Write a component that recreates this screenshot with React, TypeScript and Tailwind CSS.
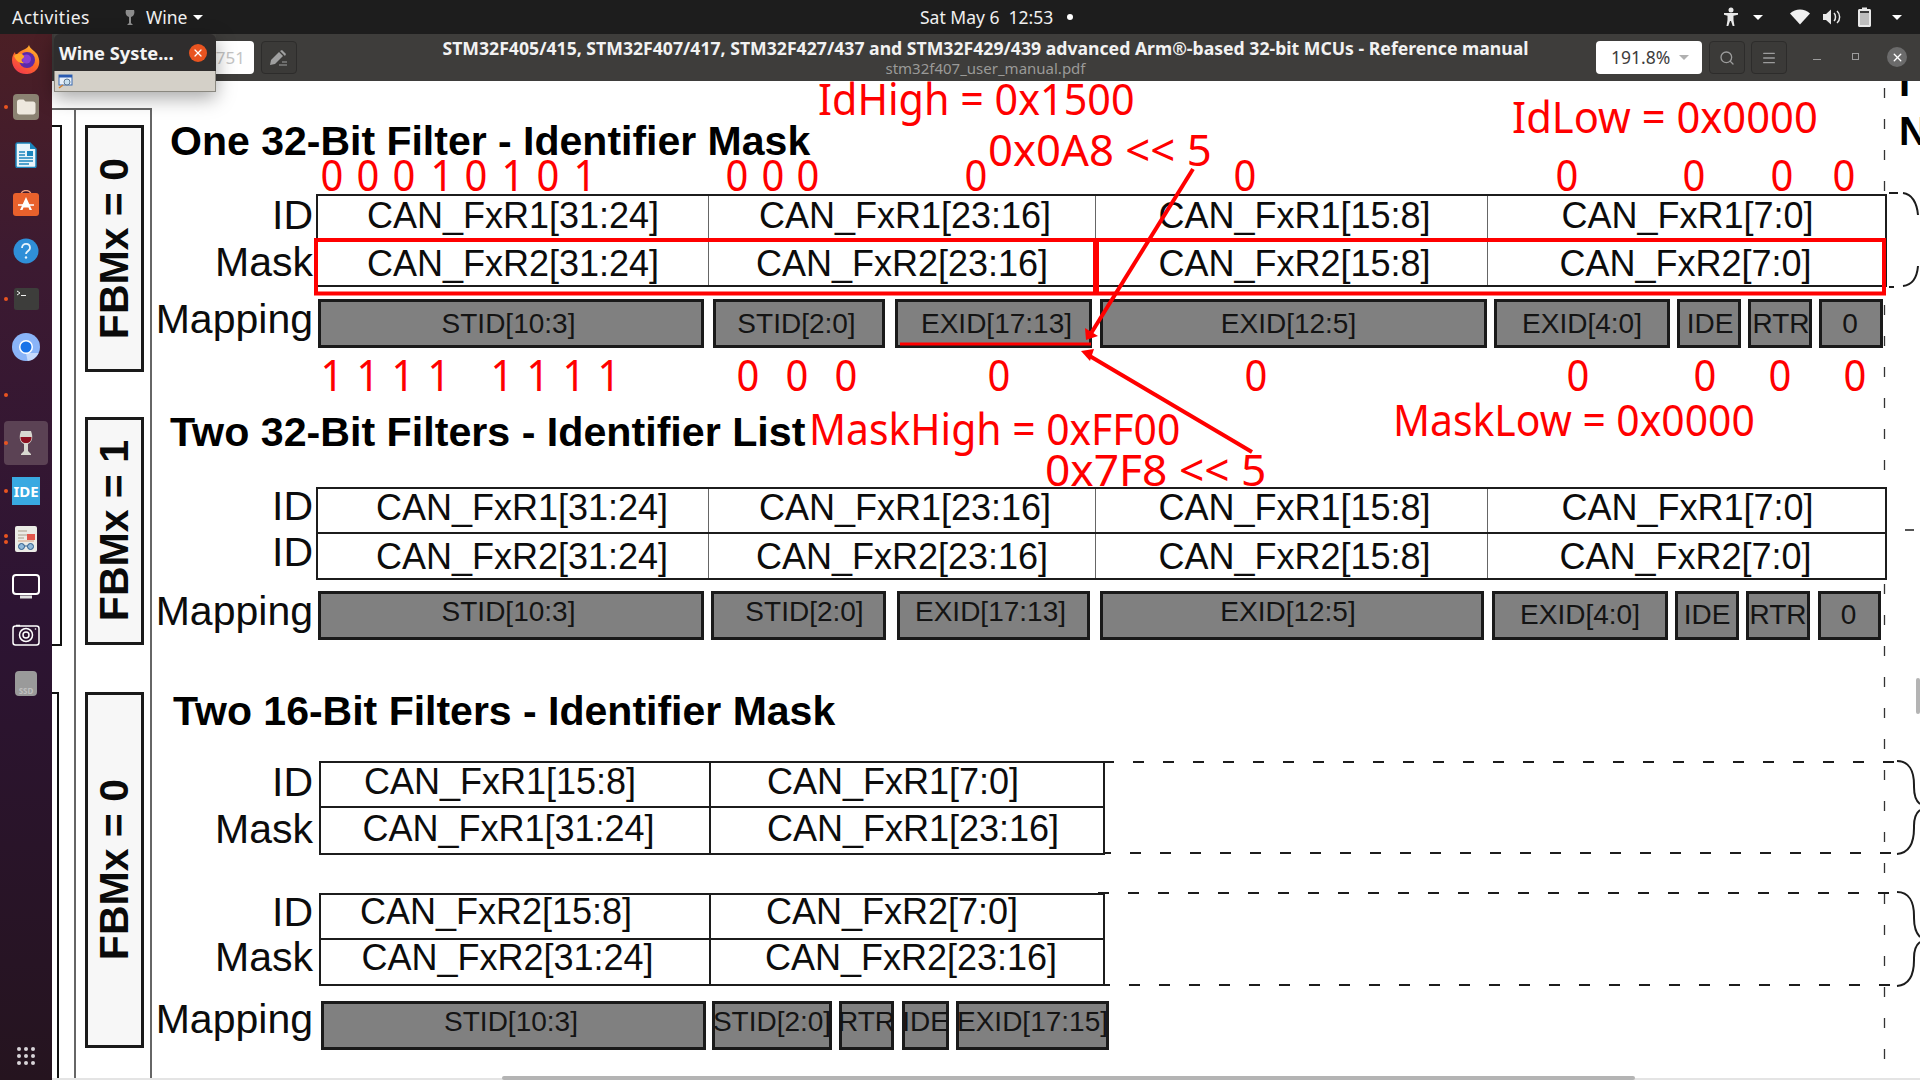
import React from "react";
import { Search, Menu, X } from "lucide-react";

const SANS = "font-['Liberation_Sans',Arial,sans-serif]";
const UI = "font-['Noto_Sans',sans-serif]";

type CellT = { t: string; dx?: number };
type RowT = { h: number; base: number; cells: CellT[] };

function Table({ width, cols, rows, thick, className }: { width: number; cols: number[]; rows: RowT[]; thick?: boolean; className?: string }) {
  return (
    <div className={"border-2 border-[#1c1c1c] bg-white " + (className ?? "")} style={{ width }}>
      {rows.map((r, ri) => {
        const last = ri === rows.length - 1;
        return (
          <div key={ri} className={"flex " + (last ? "" : "border-b-2 border-[#1c1c1c]")} style={{ height: r.h }}>
            {r.cells.map((c, ci) => {
              const lastC = ci === r.cells.length - 1;
              return (
                <div
                  key={ci}
                  className={"flex justify-center " + (lastC ? "flex-1 " : "") + (lastC ? "" : thick ? "border-r-2 border-[#1c1c1c]" : "border-r border-[#666]")}
                  style={lastC ? undefined : { width: cols[ci] }}
                >
                  <span
                    className={SANS + " block whitespace-nowrap text-[36px] leading-none text-[#0c0c0c]"}
                    style={{ marginTop: r.base - 30.5, marginLeft: (c.dx ?? 0) * 2 }}
                  >
                    {c.t}
                  </span>
                </div>
              );
            })}
          </div>
        );
      })}
    </div>
  );
}

type BoxT = { w: number; gap?: number; t: string; low?: boolean; dx?: number };
function MapRow({ base, boxes, className }: { base: number; boxes: BoxT[]; className?: string }) {
  return (
    <div className={"flex h-[49px] " + (className ?? "")}>
      {boxes.map((b, i) => (
        <div
          key={i}
          className="flex justify-center border-[3px] border-[#1a1a1a] bg-[#808080]"
          style={{ width: b.w, marginLeft: b.gap ?? 0 }}
        >
          <span
            className={SANS + " block whitespace-nowrap text-[28px] leading-none text-[#141414]"}
            style={{ marginTop: base + (b.low ? 3 : 0) - 3 - 23.7, marginLeft: (b.dx ?? 0) * 2 }}
          >
            {b.t}
          </span>
        </div>
      ))}
    </div>
  );
}

function Labels({ items, className }: { items: { t: string; h: number }[]; className?: string }) {
  return (
    <div className={"flex w-[163px] flex-col items-end " + (className ?? "")}>
      {items.map((l, i) => (
        <div key={i} className={SANS + " whitespace-nowrap text-[41px] leading-none text-[#0c0c0c]"} style={{ height: l.h }}>
          {l.t}
        </div>
      ))}
    </div>
  );
}

function MapLabel({ className }: { className?: string }) {
  return <div className={SANS + " h-[41px] w-[163px] whitespace-nowrap text-right text-[41px] leading-none text-[#0c0c0c] " + (className ?? "")}>Mapping</div>;
}

function RedT({ t, x, base, w }: { t: string; x: number; base: number; w: number }) {
  return (
    <div
      className={UI + " absolute origin-left whitespace-nowrap text-[43px] leading-none text-[#ff0000]"}
      style={{ left: x, top: base - 38.2, transform: `scaleX(${w})` }}
    >
      {t}
    </div>
  );
}

function DigitRow({ items, base }: { items: [string, number][]; base: number }) {
  return (
    <>
      {items.map(([d, cx], i) => (
        <div
          key={i}
          className={UI + " absolute w-[26px] text-center text-[43px] leading-none text-[#ff0000]"}
          style={{ left: cx - 13, top: base - 38.2, transform: "scaleX(0.93)" }}
        >
          {d}
        </div>
      ))}
    </>
  );
}

function FbmBox({ t, className }: { t: string; className: string }) {
  return (
    <div className={"flex w-[59px] items-center justify-center border-[3px] border-[#1a1a1a] bg-[#f7f7f7] " + className}>
      <span className={SANS + " rotate-180 whitespace-nowrap text-[41px] font-bold leading-none text-[#0a0a0a] [writing-mode:vertical-rl]"}>
        {t}
      </span>
    </div>
  );
}

const c = (a: string, dx = 0): CellT => ({ t: a, dx });

const topDigits: [string, number][] = [
  ["0", 332], ["0", 368], ["0", 404], ["1", 442], ["0", 476], ["1", 513], ["0", 548], ["1", 585],
  ["0", 737], ["0", 773], ["0", 808], ["0", 976], ["0", 1245], ["0", 1567], ["0", 1694], ["0", 1782], ["0", 1844],
];
const botDigits: [string, number][] = [
  ["1", 332], ["1", 368], ["1", 403], ["1", 439], ["1", 502], ["1", 538], ["1", 574], ["1", 609],
  ["0", 748], ["0", 797], ["0", 846], ["0", 999], ["0", 1256], ["0", 1578], ["0", 1705], ["0", 1780], ["0", 1855],
];

function Annotations() {
  return (
    <div className="absolute left-[-52px] top-[-81px] h-[1080px] w-[1920px]">
      <svg className="absolute left-0 top-0" width="1920" height="1080" fill="none">
        <rect x="316" y="240" width="1568" height="53.5" stroke="#ff0000" strokeWidth="4" />
        <rect x="1093" y="240" width="6" height="55" fill="#ff0000" />
        <line x1="900" y1="344" x2="1091" y2="344" stroke="#ff0000" strokeWidth="3" />
        <line x1="1193" y1="169" x2="1090" y2="335" stroke="#ff0000" strokeWidth="4" />
        <polygon points="1086,340 1085,328 1098,336" fill="#ff0000" />
        <line x1="1252" y1="452" x2="1088" y2="355" stroke="#ff0000" strokeWidth="4" />
        <polygon points="1081,351 1094,349 1090,361" fill="#ff0000" />
      </svg>
      <RedT t="IdHigh = 0x1500" x={818} base={115} w={0.96} />
      <RedT t="0x0A8 << 5" x={988} base={166} w={1.016} />
      <RedT t="IdLow = 0x0000" x={1512} base={133} w={0.97} />
      <RedT t="MaskHigh = 0xFF00" x={809} base={445} w={0.95} />
      <RedT t="MaskLow = 0x0000" x={1393} base={436} w={0.95} />
      <RedT t="0x7F8 << 5" x={1045} base={486} w={1.03} />
      <DigitRow items={topDigits} base={191} />
      <DigitRow items={botDigits} base={391} />
    </div>
  );
}

function Backdrop() {
  return (
    <div className="absolute left-[-52px] top-[-81px] h-[1080px] w-[1920px]">
      <div className="absolute left-[50px] top-[125px] h-[521px] w-[12px] border-2 border-[#111]" />
      <div className="absolute left-[40px] top-[692px] h-[400px] w-[19px] border-2 border-[#111]" />
      <div className="absolute left-[52px] top-[108px] h-[2px] w-[98px] bg-[#666]" />
      <div className="absolute left-[74px] top-[108px] h-[972px] w-[2px] bg-[#666]" />
      <div className="absolute left-[150px] top-[108px] h-[972px] w-[2px] bg-[#666]" />
      <svg className="absolute left-0 top-0" width="1920" height="1080" fill="none">
        <line x1="1884.5" y1="88" x2="1884.5" y2="1080" stroke="#333" strokeWidth="1.3" strokeDasharray="10 21" />
        <g stroke="#1c1c1c" strokeWidth="2" strokeDasharray="11 19">
          <line x1="1103" y1="762" x2="1897" y2="762" />
          <line x1="1100" y1="853" x2="1897" y2="853" />
          <line x1="1098" y1="893" x2="1897" y2="893" />
          <line x1="1099" y1="985" x2="1897" y2="985" />
        </g>
        <g stroke="#1c1c1c" strokeWidth="2">
          <path d="M1897 761c12 0 17 10 17 24v2c0 9 2 14 6 17" />
          <path d="M1920 810c-4 3-6 8-6 16v2c0 15-5 25-17 26" />
          <path d="M1897 892c12 0 17 10 17 24v2c0 9 2 15 6 19" />
          <path d="M1920 942c-4 3-6 8-6 16v2c0 15-5 25-17 26" />
          <path d="M1889 193h9M1903 193c9 1 14 10 15 22M1889 287h5M1903 286c9-1 14-8 15-20" />
          <path d="M1905 530h9" strokeWidth="1.5" />
        </g>
      </svg>
      <div className={SANS + " absolute left-[1899px] top-[62px] text-[40px] font-bold leading-none text-black"}>I</div>
      <div className={SANS + " absolute left-[1899px] top-[111px] text-[40px] font-bold leading-none text-black"}>N</div>
    </div>
  );
}

const map1: BoxT[] = [
  { w: 386, t: "STID[10:3]", dx: -2.5 },
  { gap: 9, w: 172, t: "STID[2:0]", dx: -2.5 },
  { gap: 10, w: 197, t: "EXID[17:13]", dx: 3 },
  { gap: 8, w: 387, t: "EXID[12:5]", dx: -5 },
  { gap: 7, w: 176, t: "EXID[4:0]" },
  { gap: 7, w: 64, t: "IDE", dx: 1 },
  { gap: 7, w: 64, t: "RTR", dx: 1 },
  { gap: 7, w: 64, t: "0", dx: -1 },
];
const map2: BoxT[] = [
  { w: 386, t: "STID[10:3]", dx: -2.5 },
  { gap: 7, w: 175, t: "STID[2:0]", dx: 6 },
  { gap: 11, w: 193, t: "EXID[17:13]", dx: -3 },
  { gap: 10, w: 384, t: "EXID[12:5]", dx: -4 },
  { gap: 8, w: 176, t: "EXID[4:0]", low: true },
  { gap: 7, w: 64, t: "IDE", low: true },
  { gap: 7, w: 64, t: "RTR", low: true },
  { gap: 8, w: 63, t: "0", low: true, dx: -1 },
];
const map3: BoxT[] = [
  { w: 385, t: "STID[10:3]", dx: -2.5 },
  { gap: 6, w: 120, t: "STID[2:0]" },
  { gap: 7, w: 55, t: "RTR" },
  { gap: 8, w: 47, t: "IDE" },
  { gap: 7, w: 153, t: "EXID[17:15]" },
];

function PdfPage() {
  return (
    <div className="relative flex h-full">
      {/* filter-mode tabs */}
      <div className="ml-[33px] flex w-[65px] flex-col pt-[44px]">
        <FbmBox t="FBMx = 0" className="h-[247px]" />
        <FbmBox t="FBMx = 1" className="mt-[45px] h-[228px]" />
        <FbmBox t="FBMx = 0" className="mt-[47px] h-[356px]" />
      </div>

      {/* filter diagrams */}
      <div className="flex flex-col pt-[40px]">
        <h2 className={SANS + " ml-[20px] h-[41px] whitespace-nowrap text-[41px] font-bold leading-none text-black"}>One 32-Bit Filter - Identifier Mask</h2>
        <div className="mt-[32px] flex">
          <Labels className="mt-px" items={[{ t: "ID", h: 47 }, { t: "Mask", h: 45 }]} />
          <Table
            className="ml-[3px]"
            width={1571}
            cols={[391, 387, 392]}
            rows={[
              { h: 44, base: 32, cells: [c("CAN_FxR1[31:24]"), c("CAN_FxR1[23:16]", 3), c("CAN_FxR1[15:8]", 3), c("CAN_FxR1[7:0]", 1)] },
              { h: 45, base: 36, cells: [c("CAN_FxR2[31:24]"), c("CAN_FxR2[23:16]"), c("CAN_FxR2[15:8]", 3), c("CAN_FxR2[7:0]", -1)] },
            ]}
          />
        </div>
        <div className="mt-[12px] flex">
          <MapLabel />
          <MapRow className="ml-[5px]" base={35} boxes={map1} />
        </div>

        <h2 className={SANS + " ml-[20px] mt-[64px] h-[41px] whitespace-nowrap text-[41.2px] font-bold leading-none text-black"}>Two 32-Bit Filters - Identifier List</h2>
        <div className="mt-[34px] flex">
          <Labels className="-mt-px" items={[{ t: "ID", h: 46 }, { t: "ID", h: 47 }]} />
          <Table
            className="ml-[3px]"
            width={1571}
            cols={[391, 387, 392]}
            rows={[
              { h: 45, base: 31, cells: [c("CAN_FxR1[31:24]", 9), c("CAN_FxR1[23:16]", 3), c("CAN_FxR1[15:8]", 3), c("CAN_FxR1[7:0]", 1)] },
              { h: 44, base: 35, cells: [c("CAN_FxR2[31:24]", 9), c("CAN_FxR2[23:16]"), c("CAN_FxR2[15:8]", 3), c("CAN_FxR2[7:0]", -1)] },
            ]}
          />
        </div>
        <div className="mt-[11px] flex">
          <MapLabel />
          <MapRow className="ml-[5px]" base={31} boxes={map2} />
        </div>

        <h2 className={SANS + " ml-[23px] mt-[51px] h-[41px] whitespace-nowrap text-[41px] font-bold leading-none text-black"}>Two 16-Bit Filters - Identifier Mask</h2>
        <div className="mt-[29px] flex">
          <Labels className="mt-px" items={[{ t: "ID", h: 47 }, { t: "Mask", h: 46 }]} />
          <Table
            className="ml-[6px]"
            width={786}
            thick
            cols={[390]}
            rows={[
              { h: 45, base: 31, cells: [c("CAN_FxR1[15:8]", -15), c("CAN_FxR1[7:0]", -14)] },
              { h: 45, base: 33, cells: [c("CAN_FxR1[31:24]", -6.5), c("CAN_FxR1[23:16]", 6)] },
            ]}
          />
        </div>
        <div className="mt-[38px] flex">
          <Labels className="-mt-px" items={[{ t: "ID", h: 45 }, { t: "Mask", h: 46 }]} />
          <Table
            className="ml-[6px]"
            width={786}
            thick
            cols={[390]}
            rows={[
              { h: 45, base: 29, cells: [c("CAN_FxR2[15:8]", -19), c("CAN_FxR2[7:0]", -15)] },
              { h: 44, base: 30, cells: [c("CAN_FxR2[31:24]", -7.5), c("CAN_FxR2[23:16]", 4)] },
            ]}
          />
        </div>
        <div className="mt-[15px] flex">
          <MapLabel className="-mt-[2px]" />
          <MapRow className="ml-[8px]" base={31} boxes={map3} />
        </div>
      </div>
    </div>
  );
}

function Firefox() {
  return (
    <svg width="30" height="30" viewBox="0 0 30 30">
      <defs>
        <linearGradient id="ff" x1="0.8" y1="0" x2="0.2" y2="1">
          <stop offset="0" stopColor="#ffbd2e" />
          <stop offset="0.5" stopColor="#ff6a28" />
          <stop offset="1" stopColor="#f0364f" />
        </linearGradient>
      </defs>
      <path d="M18 1c1 4 5 5 8 9 3 5 3 11 0 15-3 4-7 5-11 5C7 30 1 24 1 16c0-3 1-6 3-8 0 2 1 3 2 3 1-3 4-4 6-5 2-1 5-2 6-5z" fill="url(#ff)" />
      <circle cx="16" cy="16" r="8" fill="#5a2aa8" />
      <circle cx="15.5" cy="15" r="4.5" fill="#8b3fd0" />
      <path d="M3 12c3-3 7-3 9-1 2 1 1 3-1 4-1 1 0 3 2 4-4 1-8-2-10-7z" fill="#ffa52b" />
    </svg>
  );
}

function DockIcon({ n }: { n: number }) {
  switch (n) {
    case 0:
      return <Firefox />;
    case 1:
      return (
        <svg width="26" height="26" viewBox="0 0 26 26">
          <rect width="26" height="26" rx="4" fill="#8b8272" />
          <path d="M4 8c0-1.500 1-2.500 2.500-2.500h4l2 2H20c1.500 0 2.500 1 2.500 2.500v8c0 1.500-1 2.500-2.500 2.500H6.500C5 20.500 4 19.500 4 18z" fill="#eee8de" />
        </svg>
      );
    case 2:
      return (
        <svg width="22" height="26" viewBox="0 0 22 26">
          <path d="M1 2.500C1 1.500 1.500 1 2.500 1H15l6 6v17c0 1-.5 1.500-1.500 1.500h-17C1.500 25.500 1 25 1 24z" fill="#e8f4fa" stroke="#1b85bd" strokeWidth="1.500" />
          <path d="M15 1l6 6h-6z" fill="#1b85bd" />
          <path d="M4 10h6M4 13h6M4 16h14M4 19h14M4 22h10" stroke="#1b85bd" strokeWidth="1.500" />
          <rect x="12" y="9" width="6" height="5" fill="#1b85bd" />
        </svg>
      );
    case 3:
      return (
        <svg width="26" height="26" viewBox="0 0 26 26">
          <path d="M8 5c0-6 10-6 10 0" fill="none" stroke="#f0a080" strokeWidth="1.300" />
          <rect y="3" width="26" height="23" rx="3" fill="#e8612c" />
          <path d="M13 7l6 13h-2.500l-1-2.500h-5l-1 2.500H7z" fill="#fff" />
          <path d="M5 15h16" stroke="#fff" strokeWidth="1.500" />
        </svg>
      );
    case 4:
      return (
        <svg width="26" height="26" viewBox="0 0 26 26">
          <circle cx="13" cy="13" r="12.500" fill="#2f8fd8" />
          <path d="M9 10c0-5.500 8-5.500 8 0 0 3-4 3-4 6" fill="none" stroke="#e8f4fc" strokeWidth="1.800" />
          <circle cx="13" cy="19.500" r="1.200" fill="#e8f4fc" />
        </svg>
      );
    case 5:
      return (
        <svg width="25" height="22" viewBox="0 0 25 22">
          <rect width="25" height="22" rx="2.500" fill="#3d3d3b" />
          <path d="M3 3l3 2-3 2M7 7.500h5" fill="none" stroke="#f0f0f0" strokeWidth="1" />
        </svg>
      );
    case 6:
      return (
        <svg width="28" height="28" viewBox="0 0 28 28">
          <circle cx="14" cy="14" r="14" fill="#8ab4f8" />
          <path d="M14 20h12.600a14 14 0 0 1-11 8z" fill="#c6dafc" />
          <circle cx="14" cy="14" r="7" fill="#fff" />
          <circle cx="14" cy="14" r="5.500" fill="#1a73e8" />
        </svg>
      );
    case 7:
      return null;
    case 8:
      return (
        <svg width="14" height="26" viewBox="0 0 14 26">
          <path d="M2 1h10c2 5 2 11-3 13v7l3 3v1H2v-1l3-3v-7C0 12 0 6 2 1z" fill="#d8d8d0" />
          <path d="M1.500 7h11c0 4-2 6-5.500 6S1.500 11 1.500 7z" fill="#8c1020" />
        </svg>
      );
    case 9:
      return (
        <div className={UI + " flex h-[28px] w-[28px] items-center justify-center bg-[#39a9e1] text-[15px] font-bold text-white"}>IDE</div>
      );
    case 10:
      return (
        <svg width="22" height="26" viewBox="0 0 22 26">
          <rect width="22" height="26" rx="2" fill="#ebebe6" />
          <path d="M3 5h9M3 9h9M3 12h6" stroke="#a89c88" strokeWidth="1" />
          <rect x="12" y="8" width="8" height="6" fill="#e2574c" />
          <path d="M3 15h16" stroke="#d8a080" strokeWidth="1" />
          <circle cx="6.500" cy="20.500" r="3" fill="#90b8d8" stroke="#2a5a8a" />
          <circle cx="15.500" cy="20.500" r="3" fill="#90b8d8" stroke="#2a5a8a" />
          <path d="M9.500 20h3" stroke="#2a5a8a" />
        </svg>
      );
    case 11:
      return (
        <svg width="30" height="28" viewBox="0 0 30 28" fill="none">
          <rect x="2" y="2" width="26" height="19" rx="3" stroke="#fff" strokeWidth="2" />
          <path d="M9 24h12" stroke="#e0e0e0" strokeWidth="3" />
        </svg>
      );
    case 12:
      return (
        <svg width="28" height="24" viewBox="0 0 28 24" fill="none">
          <rect x="1" y="3" width="26" height="19" rx="2.500" stroke="#fff" strokeWidth="1.500" />
          <circle cx="14" cy="12" r="6.500" stroke="#fff" strokeWidth="1.500" />
          <circle cx="14" cy="12" r="3" stroke="#fff" strokeWidth="1.500" />
          <path d="M4 2.500h4" stroke="#fff" strokeWidth="1.500" />
          <circle cx="23.500" cy="6" r=".8" fill="#fff" />
        </svg>
      );
    default:
      return (
        <div className={UI + " flex h-[25px] w-[22px] items-end justify-center rounded-sm bg-[#9a9a9a] text-[8px] font-bold leading-[11px] text-[#c0c0c0]"}>SSD</div>
      );
  }
}

function Dock() {
  const dots: Record<number, number[]> = { 1: [0], 5: [0], 7: [0], 8: [0], 9: [0], 10: [-3, 3] };
  const items = Array.from({ length: 14 }, (_, i) => i);
  return (
    <div className="relative flex w-[52px] flex-col bg-[linear-gradient(180deg,#4b1f25_0%,#3c1a31_22%,#2d1433_55%,#25141f_100%)] pt-px">
      {items.map((i) => (
        <div key={i} className="relative flex h-[48px] w-[52px] items-center justify-center">
          {i === 8 && <div className="absolute left-[4px] top-[2px] h-[44px] w-[44px] rounded-[4px] bg-[#5b4254]" />}
          {(dots[i] ?? []).map((o, k) => (
            <div key={k} className="absolute left-[4px] top-[22px] h-[4px] w-[4px] rounded-full bg-[#e95420]" style={{ marginTop: o }} />
          ))}
          <div className="relative flex items-center justify-center">
            <DockIcon n={i} />
          </div>
        </div>
      ))}
      <div className="mb-[15px] ml-[17px] mt-auto grid w-[18px] grid-cols-3 gap-[3px]">
        {Array.from({ length: 9 }, (_, i) => (
          <div key={i} className="h-[4px] w-[4px] rounded-full bg-[#d8d4d8]" />
        ))}
      </div>
    </div>
  );
}

function Caret({ cls = "border-t-white" }: { cls?: string }) {
  return <div className={"h-0 w-0 border-x-[5px] border-t-[5px] border-x-transparent " + cls} />;
}

function TopBar() {
  return (
    <div className={UI + " relative flex h-[34px] items-center bg-[#1d1d1d] text-[17.5px] text-[#f0f0f0]"}>
      <span className="ml-[12px] w-[80px] whitespace-nowrap tracking-[0.5px]">Activities</span>
      <svg className="ml-[33px]" width="10" height="17" viewBox="0 0 10 17">
        <path d="M1 1h8c1 3 0 6-3 7v6l2 2H2l2-2V8C1 7 0 4 1 1z" fill="#8c8c8c" />
      </svg>
      <span className="ml-[11px] whitespace-nowrap">Wine</span>
      <div className="ml-[6px]">
        <Caret />
      </div>
      <div className="absolute left-[920px] flex items-center whitespace-nowrap text-[17.5px]">
        <span className="w-[134px]">Sat May 6&nbsp; 12:53</span>
        <div className="ml-[13px] h-[6px] w-[6px] rounded-full bg-white" />
      </div>
      <div className="absolute left-[1723px] top-[7px] flex items-center">
        <svg width="16" height="20" viewBox="0 0 16 20" fill="#e8e8e8">
          <circle cx="8" cy="3" r="2.500" />
          <path d="M1 6h14v1.800l-4.500 1V13l1 6h-1.800L8 14l-1 0-1.700 5H3.500l1-6V8.800L1 7.800z" />
        </svg>
        <div className="ml-[14px]">
          <Caret />
        </div>
        <svg className="ml-[27px]" width="20" height="16" viewBox="0 0 20 16" fill="#f0f0f0">
          <path d="M0 4.500C5.500-1 14.500-1 20 4.500L10 15.500z" />
        </svg>
        <svg className="ml-[13px]" width="18" height="16" viewBox="0 0 18 16" fill="#e8e8e8">
          <path d="M0 5h3l5-4.500v15L3 11H0z" />
          <path d="M11 4c2 2 2 6 0 8M14 2c3.500 3 3.500 9 0 12" fill="none" stroke="#e8e8e8" strokeWidth="1.500" />
        </svg>
        <svg className="ml-[17px]" width="13" height="20" viewBox="0 0 13 20">
          <path d="M4 .5h5V2h2.500c.8 0 1.500.6 1.500 1.500v15c0 .8-.7 1.500-1.500 1.500h-10C.7 20 0 19.300 0 18.500v-15C0 2.600.7 2 1.500 2H4z" fill="#e8e8e8" />
          <rect x="2" y="4" width="9" height="14" fill="#3a3a3a" />
          <rect x="2" y="6" width="9" height="12" fill="#bdbdbd" />
        </svg>
        <div className="ml-[21px]">
          <Caret />
        </div>
      </div>
    </div>
  );
}

function HeadBtn({ children }: { children: React.ReactNode }) {
  return (
    <div className="flex h-[33px] w-[36px] items-center justify-center rounded-[4px] border border-[#2d2c2b] bg-[#3b3a38]">
      {children}
    </div>
  );
}

function Header() {
  return (
    <div className={UI + " relative flex h-[47px] items-center bg-[#3e3d3b]"}>
      <div className="absolute left-[150px] top-[7px] flex h-[33px] w-[52px] items-center justify-end rounded-[4px] bg-white pr-[9px] text-[17px] text-[#c4c4c4]">751</div>
      <div className="absolute left-[209px] top-[7px]">
        <HeadBtn>
          <svg width="18" height="16" viewBox="0 0 18 16">
            <path d="M0 15l1-5L9 2l4 4-8 8zM10 1l2-1 4 4-1 2z" fill="#a0a0a0" />
            <path d="M9 15h8M12 12h5" stroke="#a0a0a0" />
          </svg>
        </HeadBtn>
      </div>
      <div className="absolute left-[380px] top-[4px] flex w-[1107px] flex-col items-center">
        <div className="w-full whitespace-nowrap text-center text-[17.65px] font-bold leading-[21px] text-[#f2f2f2]">
          STM32F405/415, STM32F407/417, STM32F427/437 and STM32F429/439 advanced Arm®-based 32-bit MCUs - Reference manual
        </div>
        <div className="whitespace-nowrap text-[15px] leading-[19px] text-[#9a9a98]">stm32f407_user_manual.pdf</div>
      </div>
      <div className="absolute left-[1544px] top-[7px] flex h-[33px] w-[106px] items-center rounded-[4px] bg-white pl-[15px] text-[17.5px] text-[#3d3d3d]">
        191.8%
        <div className="ml-[9px]">
          <Caret cls="border-t-[#b0b0b0]" />
        </div>
      </div>
      <div className="absolute left-[1657px] top-[7px] flex gap-[6px]">
        <HeadBtn>
          <Search size={16} color="#9c9c9c" />
        </HeadBtn>
        <HeadBtn>
          <Menu size={16} color="#9c9c9c" />
        </HeadBtn>
      </div>
      <div className="absolute left-[1761px] top-[25px] h-px w-[8px] bg-[#9c9c9c]" />
      <div className="absolute left-[1800px] top-[19px] h-[7px] w-[7px] border border-[#9c9c9c]" />
      <div className="absolute left-[1835px] top-[13px] flex h-[20px] w-[20px] items-center justify-center rounded-full bg-[#6b6b6b]">
        <X size={13} color="#fff" strokeWidth={2.5} />
      </div>
    </div>
  );
}

function Popup() {
  return (
    <div className={UI + " absolute left-[54px] top-[34px] z-10 w-[162px] shadow-[0_6px_18px_rgba(0,0,0,0.35)]"}>
      <div className="flex h-[37px] items-center justify-between rounded-t-[6px] bg-[#2f2d2d] pl-[5px] pr-[9px]">
        <span className="whitespace-nowrap text-[18.3px] font-bold text-[#f4f4f4]">Wine Syste...</span>
        <div className="flex h-[18px] w-[18px] items-center justify-center rounded-full bg-[#e95420]">
          <X size={12} color="#fff" strokeWidth={2.5} />
        </div>
      </div>
      <div className="flex h-[21px] items-center border border-t-0 border-[#8a8880] bg-[#d4d0c8] pl-[3px]">
        <svg width="15" height="15" viewBox="0 0 15 15">
          <rect x="1" y="1" width="13" height="10" fill="#e8f0fa" stroke="#3a6ab0" />
          <rect x="1" y="1" width="13" height="2.500" fill="#2a5ab0" />
          <circle cx="9" cy="8" r="3" fill="#c8e0f0" stroke="#607890" />
          <path d="M1 14l4-3" stroke="#d08030" strokeWidth="1.500" />
        </svg>
      </div>
    </div>
  );
}

export default function App() {
  return (
    <div className="relative flex h-[1080px] w-[1920px] flex-col overflow-hidden bg-white">
      <TopBar />
      <div className="flex min-h-0 flex-1">
        <Dock />
        <div className="flex min-w-0 flex-1 flex-col">
          <Header />
          <div className="relative flex-1 overflow-hidden bg-white">
            <Backdrop />
            <PdfPage />
            <Annotations />
            <div className="absolute bottom-0 left-0 h-[2px] w-full bg-[#e4e4e4]" />
            <div className="absolute bottom-0 left-[450px] h-[4px] w-[1133px] rounded-sm bg-[#b4b4b4]" />
            <div className="absolute right-0 top-[597px] h-[36px] w-[4px] rounded-sm bg-[#b4b4b4]" />
          </div>
        </div>
      </div>
      <Popup />
    </div>
  );
}
